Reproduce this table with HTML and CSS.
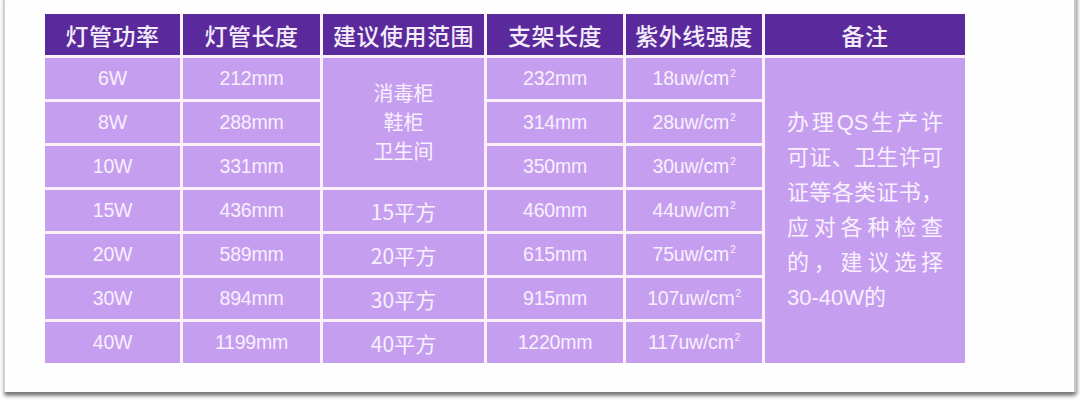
FILE: index.html
```html
<!DOCTYPE html>
<html lang="zh-CN">
<head>
<meta charset="utf-8">
<title>紫外线灯管参数</title>
<link rel="stylesheet" href="styles.css">
</head>
<body>
<div class="card">
  <div class="table">
    <div class="th">灯管功率</div>
    <div class="th">灯管长度</div>
    <div class="th">建议使用范围</div>
    <div class="th">支架长度</div>
    <div class="th">紫外线强度</div>
    <div class="th">备注</div>

    <div class="td">6W</div>
    <div class="td">212mm</div>
    <div class="td cn scope"><span class="line">消毒柜</span><span class="line">鞋柜</span><span class="line">卫生间</span></div>
    <div class="td">232mm</div>
    <div class="td">18uw/cm<sup>2</sup></div>
    <div class="td note">办理QS生产许可证、卫生许可证等各类证书，应对各种检查的，建议选择30-40W的</div>

    <div class="td">8W</div>
    <div class="td">288mm</div>
    <div class="td">314mm</div>
    <div class="td">28uw/cm<sup>2</sup></div>

    <div class="td">10W</div>
    <div class="td">331mm</div>
    <div class="td">350mm</div>
    <div class="td">30uw/cm<sup>2</sup></div>

    <div class="td">15W</div>
    <div class="td">436mm</div>
    <div class="td cn">15平方</div>
    <div class="td">460mm</div>
    <div class="td">44uw/cm<sup>2</sup></div>

    <div class="td">20W</div>
    <div class="td">589mm</div>
    <div class="td cn">20平方</div>
    <div class="td">615mm</div>
    <div class="td">75uw/cm<sup>2</sup></div>

    <div class="td">30W</div>
    <div class="td">894mm</div>
    <div class="td cn">30平方</div>
    <div class="td">915mm</div>
    <div class="td">107uw/cm<sup>2</sup></div>

    <div class="td">40W</div>
    <div class="td">1199mm</div>
    <div class="td cn">40平方</div>
    <div class="td">1220mm</div>
    <div class="td">117uw/cm<sup>2</sup></div>
  </div>
</div>
</body>
</html>
```

FILE: styles.css
```css
html, body {
  margin: 0;
  padding: 0;
  background: #ffffff;
  overflow: hidden;
}
body {
  width: 1080px;
  height: 405px;
  font-family: "Liberation Sans", "Noto Sans CJK SC", sans-serif;
}
.card {
  box-sizing: border-box;
  margin: -6px 0 0 3px;
  width: 1073px;
  height: 398px;
  background: #fefefe;
  border-left: 2px solid #d2d2d2;
  border-right: 2px solid #c9c9c9;
  box-shadow: 0 5px 4px -1px rgba(0, 0, 0, 0.38), 2px 3px 3px rgba(0, 0, 0, 0.25);
  padding: 20px 0 0 40px;
}
.table {
  display: grid;
  grid-template-columns: 135px 137px 161px 136px 136px 200px;
  grid-template-rows: 41px repeat(7, 41px);
  gap: 3px;
  width: 920px;
  background: #fcf1fb;
}
.th {
  background: #5a2a9c;
  color: #f4ecfb;
  font-family: "Noto Sans CJK SC", sans-serif;
  font-size: 23px;
  font-weight: 500;
  display: flex;
  align-items: center;
  justify-content: center;
  letter-spacing: 0.5px;
}
.td {
  background: #c69ef0;
  color: #f8f0fe;
  font-size: 19.5px;
  display: flex;
  align-items: center;
  justify-content: center;
  letter-spacing: -0.2px;
}
.td sup {
  font-size: 10px;
  align-self: flex-start;
  margin-top: 10px;
  margin-left: 1px;
}
.cn {
  font-family: "Noto Sans CJK SC", sans-serif;
  font-size: 21px;
  letter-spacing: 0;
}
.scope {
  grid-column: 3;
  grid-row: 2 / span 3;
  flex-direction: column;
  font-size: 20px;
  padding-bottom: 2px;
}
.scope .line {
  display: block;
  height: 29px;
  line-height: 29px;
}
.note {
  grid-column: 6;
  grid-row: 2 / span 7;
  display: block;
  box-sizing: border-box;
  padding: 47px 22px 0 22px;
  font-family: "Liberation Sans", "Noto Sans CJK SC", sans-serif;
  font-size: 22px;
  line-height: 35px;
  text-align: justify;
  text-justify: inter-character;
  letter-spacing: 0;
}
```
